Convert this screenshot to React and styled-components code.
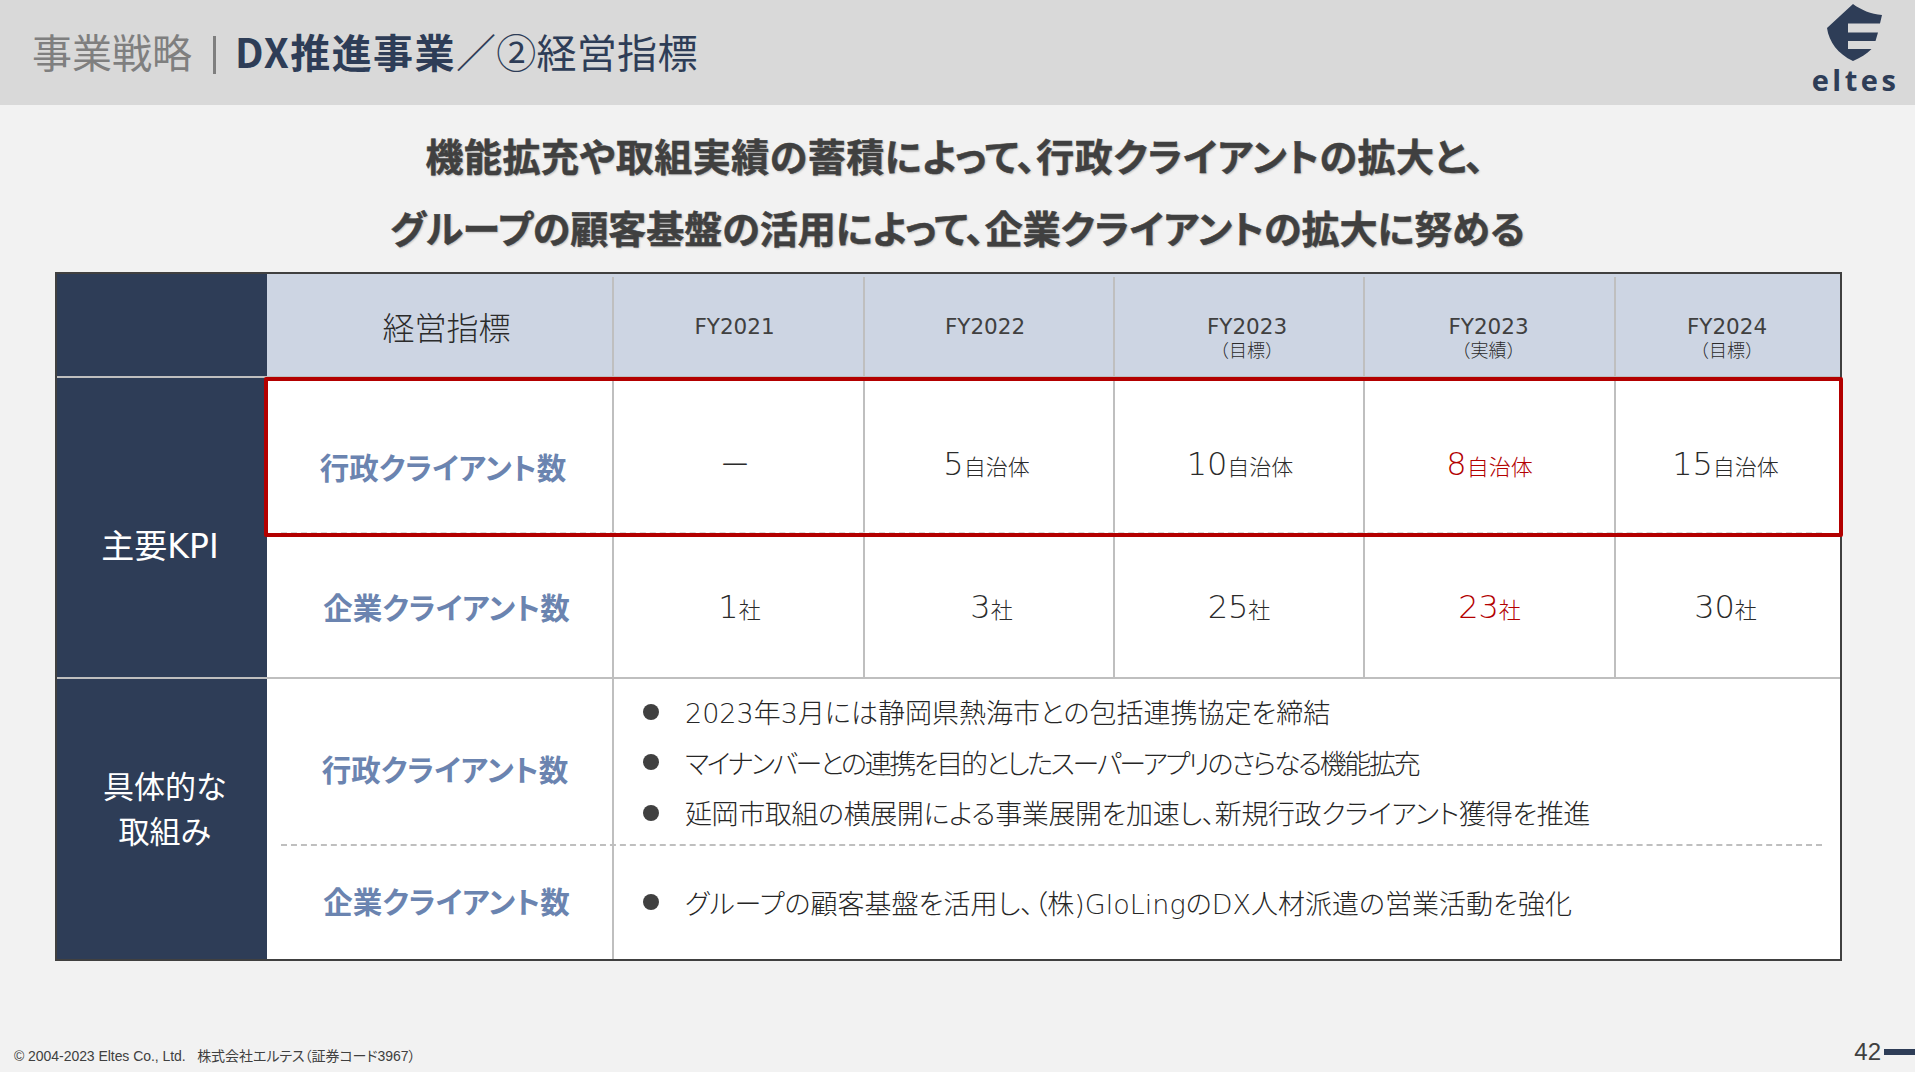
import React from 'react';
import styled, { createGlobalStyle } from 'styled-components';

const JP = '"Noto Sans CJK JP", sans-serif';
const MIXED = '"DejaVu Sans", "Noto Sans CJK JP", sans-serif';
const NAVY = '#2e3d57';
const LINE = '#bfbfbf';
const RED = '#b30000';
const TEXT = '#404040';

const GlobalStyle = createGlobalStyle`
  html, body {
    margin: 0;
    padding: 0;
    background: #f2f2f2;
  }
`;

const Page = styled.div`
  width: 1915px;
  height: 1072px;
  display: flex;
  flex-direction: column;
  overflow: hidden;
  background: #f2f2f2;
  color: ${TEXT};
  font-family: ${JP};
`;

const Header = styled.header`
  height: 105px;
  flex: none;
  box-sizing: border-box;
  padding: 0 18px 0 32px;
  display: flex;
  justify-content: space-between;
  background: #d9d9d9;
`;

const PageTitle = styled.h1`
  margin: 0 0 1px;
  align-self: center;
  font-size: 40px;
  font-weight: 400;
  line-height: 1;
  color: #7f7f7f;
  white-space: nowrap;
`;

const TitleBar = styled.span`
  display: inline-block;
  width: 3px;
  height: 38px;
  margin: 0 19px 0 21px;
  vertical-align: -6px;
  background: #7f7f7f;
`;

const TitleStrong = styled.span`
  color: ${NAVY};
  font-weight: 700;
  letter-spacing: 1.4px;
`;

const TitleNavy = styled.span`
  color: ${NAVY};
  letter-spacing: 0.3px;
`;

const Logo = styled.div`
  display: flex;
  flex-direction: column;
  align-items: center;
  width: 86px;
  padding-top: 4px;
`;

const LogoWord = styled.span`
  margin-top: 2px;
  padding-left: 3px;
  font-family: "Open Sans", sans-serif;
  font-size: 29px;
  font-weight: 700;
  line-height: 32px;
  letter-spacing: 3.5px;
  color: ${NAVY};
`;

const Lead = styled.div`
  height: 167px;
  flex: none;
  box-sizing: border-box;
  padding-top: 14px;
  text-align: center;
  font-size: 38px;
  font-weight: 700;
  line-height: 72px;
  font-feature-settings: "palt";
  -webkit-text-stroke: 0.5px ${TEXT};
  text-shadow: 1px 1px 2px rgba(0, 0, 0, 0.25);
`;

const LeadLine = styled.div`
  padding-right: ${p => p.$back || 0}px;
  letter-spacing: ${p => p.$track || 0}px;
`;

const Table = styled.div`
  position: relative;
  flex: none;
  box-sizing: border-box;
  width: 1787px;
  margin-left: 55px;
  border: 2px solid ${TEXT};
  display: grid;
  grid-template-columns: 210px 345px 251px 250px 250px 251px 1fr;
  grid-template-rows: 102px 161px 140px 168px 114px;
  background: #fff;
`;

const SideCell = styled.div`
  grid-row: ${p => p.$rows};
  grid-column: 1;
  box-sizing: border-box;
  display: flex;
  align-items: center;
  justify-content: center;
  padding: ${p => p.$pad || 0};
  background: ${NAVY};
  border-top: ${p => (p.$rule ? `2px solid ${LINE}` : 'none')};
  color: #fff;
  font-family: ${MIXED};
  font-size: ${p => p.$size || 30}px;
  line-height: 45px;
  text-align: center;
`;

const HeadCell = styled.div`
  position: relative;
  box-sizing: border-box;
  display: flex;
  flex-direction: column;
  align-items: center;
  justify-content: center;
  padding: ${p => p.$pad || 0};
  background: #cdd5e3;
  font-family: ${MIXED};
  font-size: 21.5px;
  line-height: 24px;
  &::before {
    content: '';
    display: ${p => (p.$noLine ? 'none' : 'block')};
    position: absolute;
    left: 0;
    top: 3px;
    bottom: 0;
    width: 2px;
    background: ${LINE};
  }
`;

const HeadTitle = styled.span`
  font-family: ${JP};
  font-size: 32px;
  font-weight: 300;
  line-height: 40px;
  color: #2b2b2b;
`;

const HeadNote = styled.span`
  font-family: ${JP};
  font-size: 18px;
  font-weight: 300;
  line-height: 21px;
  color: #2b2b2b;
`;

const RowLabel = styled.div`
  box-sizing: border-box;
  display: flex;
  align-items: center;
  justify-content: center;
  padding: ${p => p.$pad || 0};
  border-top: ${p => (p.$rule ? `2px solid ${LINE}` : 'none')};
  font-size: 29.5px;
  font-weight: 700;
  font-feature-settings: "palt";
  color: #6b84b0;
  white-space: nowrap;
`;

const ValueCell = styled.div`
  box-sizing: border-box;
  display: flex;
  align-items: center;
  justify-content: center;
  padding: ${p => p.$top}px ${p => (p.$nudge < 0 ? -p.$nudge : 0)}px 0 ${p => (p.$nudge > 0 ? p.$nudge : 0)}px;
  border-left: 2px solid ${LINE};
  border-top: ${p => (p.$rule ? `2px solid ${LINE}` : 'none')};
  font-family: ${MIXED};
  font-size: 32px;
  font-weight: 300;
  line-height: 44px;
  color: ${p => (p.$red ? RED : '#2b2b2b')};
`;

const Unit = styled.span`
  font-family: ${JP};
  font-size: 22px;
`;

const NoteCell = styled.div`
  grid-column: 3 / -1;
  box-sizing: border-box;
  display: flex;
  flex-direction: column;
  justify-content: center;
  padding-left: 29px;
  border-left: 2px solid ${LINE};
  border-top: ${p => (p.$rule ? `2px solid ${LINE}` : 'none')};
`;

const Bullet = styled.div`
  display: flex;
  align-items: center;
  gap: 26px;
  height: 50.5px;
  font-family: ${MIXED};
  font-size: 27px;
  font-weight: 300;
  font-feature-settings: "palt";
  letter-spacing: ${p => p.$track || 0}px;
  white-space: nowrap;
  color: #262626;
  &::before {
    content: '';
    flex: none;
    width: 16px;
    height: 16px;
    border-radius: 50%;
    background: ${TEXT};
  }
`;

const DashedRule = styled.div`
  position: absolute;
  left: 224px;
  right: 18px;
  top: ${p => p.$top}px;
  border-top: 2px dashed ${p => p.$tone};
`;

const Highlight = styled.div`
  position: absolute;
  left: 207px;
  top: 103px;
  width: 1579px;
  height: 160px;
  box-sizing: border-box;
  border: 4px solid ${RED};
  border-radius: 2px;
`;

const Footer = styled.footer`
  margin-top: auto;
  height: 38px;
  flex: none;
  display: flex;
  align-items: flex-start;
  justify-content: space-between;
  padding-left: 14px;
`;

const Copyright = styled.span`
  margin-top: 13px;
  font-family: "Liberation Sans", ${JP};
  font-size: 14px;
  line-height: 18px;
  letter-spacing: -0.05px;
  font-feature-settings: "palt";
  white-space: pre;
  color: ${TEXT};
`;

const PageNumber = styled.div`
  display: flex;
  align-items: center;
  gap: 3px;
  margin-top: 4px;
  font-family: "Liberation Sans", sans-serif;
  font-size: 24px;
  line-height: 28px;
  &::after {
    content: '';
    width: 31px;
    height: 6px;
    background: ${NAVY};
  }
`;

const Shield = () => (
  <svg width="57" height="58" viewBox="0 0 57 58" aria-hidden="true">
    <path
      fill={NAVY}
      d="M27 0C35 6 45 10 56 11L54 19.5L22 19.5L22 28.5L52 28.5L49.5 37L22 37L22 45L45.5 45C41 50 34 54 27 57C12 50 3 38 1 24Z"
    />
  </svg>
);

const years = [
  { label: 'FY2021', pad: '4px 6px 0 0' },
  { label: 'FY2022', pad: '4px 6px 0 0' },
  { label: 'FY2023', note: '（目標）', pad: '25px 0 0 18px' },
  { label: 'FY2023', note: '（実績）', pad: '25px 0 0' },
  { label: 'FY2024', note: '（目標）', pad: '25px 0 0' },
];

const govRow = [
  { num: '－', nudge: -7 },
  { num: '5', unit: '自治体', nudge: -5 },
  { num: '10', unit: '自治体', nudge: 2 },
  { num: '8', unit: '自治体', red: true },
  { num: '15', unit: '自治体', nudge: -5 },
];

const corpRow = [
  { num: '1', unit: '社', nudge: 2 },
  { num: '3', unit: '社', nudge: 5 },
  { num: '25', unit: '社' },
  { num: '23', unit: '社', red: true },
  { num: '30', unit: '社', nudge: -5 },
];

const govNotes = [
  { text: '2023年3月には静岡県熱海市との包括連携協定を締結' },
  { text: 'マイナンバーとの連携を目的としたスーパーアプリのさらなる機能拡充', track: -2.4 },
  { text: '延岡市取組の横展開による事業展開を加速し、新規行政クライアント獲得を推進', track: -0.4 },
];

const Values = ({ items, top, rule }) =>
  items.map((v, i) => (
    <ValueCell key={i} $red={v.red} $top={top} $rule={rule} $nudge={v.nudge || 0}>
      <span>
        {v.num}
        {v.unit && <Unit>{v.unit}</Unit>}
      </span>
    </ValueCell>
  ));

export default function App() {
  return (
    <Page>
      <GlobalStyle />
      <Header>
        <PageTitle>
          事業戦略
          <TitleBar />
          <TitleStrong>DX推進事業</TitleStrong>
          <TitleNavy>／②経営指標</TitleNavy>
        </PageTitle>
        <Logo>
          <Shield />
          <LogoWord>eltes</LogoWord>
        </Logo>
      </Header>

      <Lead>
        <LeadLine $track={0.5} $back={5}>機能拡充や取組実績の蓄積によって、行政クライアントの拡大と、</LeadLine>
        <LeadLine>グループの顧客基盤の活用によって、企業クライアントの拡大に努める</LeadLine>
      </Lead>

      <Table>
        <SideCell $rows="1" />
        <HeadCell $noLine $pad="2px 0 0 14px">
          <HeadTitle>経営指標</HeadTitle>
        </HeadCell>
        {years.map((y, i) => (
          <HeadCell key={i} $pad={y.pad}>
            {y.label}
            {y.note && <HeadNote>{y.note}</HeadNote>}
          </HeadCell>
        ))}

        <SideCell $rows="2 / span 2" $rule $pad="38px 4px 0 0" $size={33}>
          主要KPI
        </SideCell>
        <RowLabel $rule $pad="16px 0 0 7px">行政クライアント数</RowLabel>
        <Values items={govRow} top={14} rule />

        <RowLabel $pad="0 0 2px 14px">企業クライアント数</RowLabel>
        <Values items={corpRow} top={0} />

        <SideCell $rows="4 / span 2" $rule $pad="0 0 18px 6px" $size={31}>
          具体的な
          <br />
          取組み
        </SideCell>
        <RowLabel $rule $pad="12px 0 0 11px">行政クライアント数</RowLabel>
        <NoteCell $rule>
          {govNotes.map(n => (
            <Bullet key={n.text} $track={n.track}>{n.text}</Bullet>
          ))}
        </NoteCell>

        <RowLabel $pad="0 0 4px 14px">企業クライアント数</RowLabel>
        <NoteCell>
          <Bullet>グループの顧客基盤を活用し、（株)GloLingのDX人材派遣の営業活動を強化</Bullet>
        </NoteCell>

        <DashedRule $top={258} $tone="#d9d9d9" />
        <DashedRule $top={570} $tone="#bfbfbf" />
        <Highlight />
      </Table>

      <Footer>
        <Copyright>{'© 2004-2023 Eltes Co., Ltd.   株式会社エルテス（証券コード3967）'}</Copyright>
        <PageNumber>42</PageNumber>
      </Footer>
    </Page>
  );
}
